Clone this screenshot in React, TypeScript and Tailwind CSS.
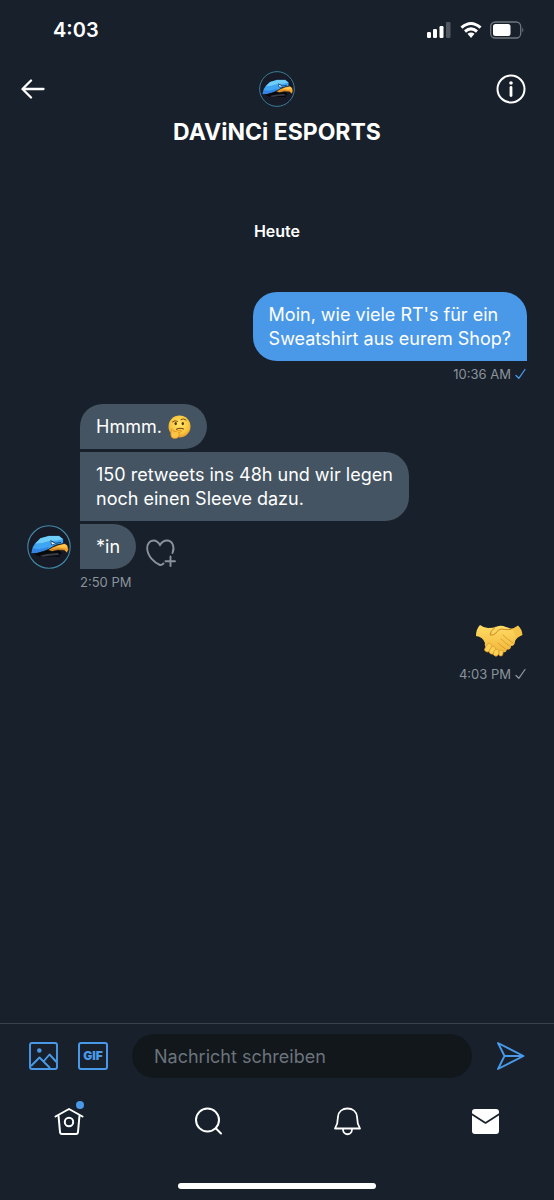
import React from 'react';

const EagleAvatar: React.FC<{ className: string }> = ({ className }) => (
  <svg viewBox="0 0 44 44" className={className} role="img" aria-label="DAViNCi ESPORTS">
    <circle cx="22" cy="22" r="21.2" fill="#171a27" stroke="#4189a6" strokeWidth="1.1" />
    <path d="M6 28 L20 24 L33 26 L35 29 L32 29.500 L33 32 L24 31.500 L15 32 L9 30Z" fill="#08090d" />
    <path d="M13 30.500 L20 29 L31 28 L32 30 L24 30.500 L16 31.800Z" fill="#3a3d48" />
    <path d="M4 28.500 L5.500 22 L8 18 L13.500 13 L22 10.500 L32 10.500 L36.500 14 L36.500 18.500 L29 20 L22 24 L17 26 L10 28Z" fill="#3fa4f2" stroke="#0a0d14" strokeWidth="0.6" />
    <path d="M8.500 18.500 L13.500 13.300 L22 10.900 L31.800 10.900 L36 14.200 L30 15.500 L22 16 L15 18Z" fill="#6fcdf8" />
    <path d="M4.500 28 L6 23.500 L12 24 L18 23 L22 21.500 L21 24 L17 25.600 L10 27.600Z" fill="#3384e6" />
    <path d="M21 25 L26 22 L31 20 L38 18.500 L40.500 20.500 L41.500 24.500 L40 28 L37.500 25.500 L31 25 L25 26.300Z" fill="#f5a62f" stroke="#0a0d14" strokeWidth="0.5" />
    <path d="M29 21.500 L37.500 19 L40 21 L40.500 22.500 L34 22.500Z" fill="#ffc64f" />
    <path d="M24 24.800 L31 23.900 L37.500 24.500" fill="none" stroke="#a8611a" strokeWidth="0.6" />
    <path d="M23.500 15.500 L28.500 18.300 L34 17.500 M24 16.500 L24.500 19.500 L27.500 19.800" fill="none" stroke="#0f2440" strokeWidth="0.8" />
    <path d="M24.300 16.700 L27.800 18.700 L25 19.400Z" fill="#f7fbff" />
  </svg>
);

const ThinkingFace = () => (
  <svg viewBox="0 0 24 24" className="inline-block size-6 align-[-6px]" role="img" aria-label="🤔">
    <defs>
      <radialGradient id="face" cx="50%" cy="40%" r="60%">
        <stop offset="0" stopColor="#ffe667" />
        <stop offset="0.7" stopColor="#f9c63d" />
        <stop offset="1" stopColor="#e89b2c" />
      </radialGradient>
    </defs>
    <circle cx="12.500" cy="11.500" r="11" fill="url(#face)" />
    <ellipse cx="8.700" cy="8.600" rx="1.200" ry="1.700" fill="#57351a" />
    <ellipse cx="15.800" cy="8.600" rx="1.200" ry="1.700" fill="#57351a" />
    <path d="M5.500 6.800 Q8 4.800 10.500 6.300 M14 4.500 Q16.500 2.800 19 5" fill="none" stroke="#7a4b18" strokeWidth="1" strokeLinecap="round" />
    <path d="M9.500 14.300 Q13 12.500 16.500 14" fill="none" stroke="#70431b" strokeWidth="1.100" strokeLinecap="round" />
    <path d="M4.500 14.500 Q5.500 13.500 6.500 15 L7 17 Q10 15.500 13.500 15.200 Q15.500 15.500 14 16.800 L11.500 17.500 Q13 19 12 21 Q10.500 24 7 23.500 Q3.500 23 3.800 19Z" fill="#fbc545" stroke="#d88720" strokeWidth="0.700" />
  </svg>
);

const Handshake = () => (
  <svg viewBox="0 0 48 34" className="h-[34px] w-12" role="img" aria-label="🤝">
    <defs>
      <linearGradient id="hand" x1="0" y1="0" x2="0" y2="1">
        <stop offset="0" stopColor="#ffdc66" />
        <stop offset="1" stopColor="#f0b436" />
      </linearGradient>
    </defs>
    <path d="M35 5 Q40 4 43 1.500 Q47 5 47.500 11 Q42 13 40 17 L37 20Z" fill="#f5c347" />
    <path d="M1 12 Q1 5 5 1 Q9 4 13 4 Q18 4 22 2.500 Q26 1 31 3 L37 5 Q41 10 40 17 Q40 22 36 22 Q36 26 32 25.500 Q31 29 28 28 Q27 31 24 30 Q19 32 17 29 Q13 29 13 25 Q9 23 10 19 Q8 13 1 12Z" fill="url(#hand)" />
    <path d="M36 5.500 Q31 6 26 5 Q23 5.500 21 9 Q18 12 15 11 Q15 7 20 3.500" fill="none" stroke="#cb8c25" strokeWidth="1" strokeLinecap="round" />
    <path d="M28 11 Q32 15 38 19 M26 15 L35 22.500 M23 19 L31 25.500" fill="none" stroke="#d99a2b" strokeWidth="0.900" strokeLinecap="round" />
    <g fill="#fbd055" stroke="#d99a2b" strokeWidth="0.700">
      <rect x="11" y="19" width="5" height="9" rx="2.500" transform="rotate(30 13 23)" />
      <rect x="15" y="22" width="5" height="8" rx="2.500" transform="rotate(27 17 26)" />
      <rect x="19" y="25" width="5" height="7" rx="2.500" transform="rotate(22 21 28)" />
      <rect x="24" y="26" width="4" height="6" rx="2" transform="rotate(12 26 29)" />
    </g>
  </svg>
);

const Check: React.FC<{ className: string }> = ({ className }) => (
  <svg viewBox="0 0 12 12" className={`size-3 ${className}`} fill="none" stroke="currentColor" strokeWidth="1.300" strokeLinecap="round" strokeLinejoin="round" aria-label="Gesendet">
    <path d="M1 7.500 L3.800 10.300 L10 1.500" />
  </svg>
);

const StatusBar = () => (
  <div className="flex h-15 items-center justify-between pr-[29px] pl-[53px]">
    <span className="text-xl font-semibold">4:03</span>
    <div className="flex items-center gap-2">
      <svg viewBox="0 0 25 18" className="mr-px h-[18px] w-[25px]" fill="#fff">
        <rect x="1" y="11" width="4" height="6" rx="1.200" />
        <rect x="7" y="8" width="4" height="9" rx="1.200" />
        <rect x="13.500" y="5" width="4" height="12" rx="1.200" />
        <rect x="20" y="1" width="4.500" height="16" rx="1.200" opacity="0.25" />
      </svg>
      <svg viewBox="0 0 22 18" className="h-[18px] w-[22px]" fill="none" stroke="#fff" strokeWidth="3">
        <path d="M1.500 6.700 Q11 -1.700 20.500 6.700" />
        <path d="M5 10.500 Q11 5.300 17 10.500" />
        <path d="M7.500 12.800 Q11 10.200 14.500 12.800 L11 17Z" fill="#fff" stroke="none" />
      </svg>
      <svg viewBox="0 0 35 18" className="h-[18px] w-[35px]">
        <rect x="0.700" y="1" width="30" height="16" rx="4.500" fill="none" stroke="#70757c" strokeWidth="1.300" />
        <rect x="3" y="3" width="17.500" height="12" rx="2.500" fill="#fff" />
        <path d="M32.300 6.500 Q34.500 9 32.300 11.500Z" fill="#70757c" />
      </svg>
    </div>
  </div>
);

const ChatHeader = () => (
  <header className="px-5 pt-[11px]">
    <div className="flex items-center justify-between">
      <button type="button" aria-label="Zurück" className="w-[38px]">
        <svg viewBox="0 0 26 20" className="h-5 w-[26px]" fill="none" stroke="#fff" strokeWidth="2.300" strokeLinecap="round" strokeLinejoin="round">
          <path d="M23.500 10 H3 M11 1.500 L2.500 10 L11 18.500" />
        </svg>
      </button>
      <EagleAvatar className="size-9" />
      <button type="button" aria-label="Info" className="w-[38px]">
        <svg viewBox="0 0 30 30" className="size-[30px]" fill="none" stroke="#fff" strokeWidth="2" strokeLinecap="round">
          <circle cx="15" cy="15" r="13.500" />
          <path d="M15 13.500 V21.500" strokeWidth="2.800" />
          <circle cx="15" cy="9" r="1.800" fill="#fff" stroke="none" />
        </svg>
      </button>
    </div>
    <h1 className="mt-[11px] text-center text-[23px] leading-7 font-bold">DAViNCi ESPORTS</h1>
  </header>
);

const received = [
  { id: 1, shape: 'rounded-t-3xl rounded-br-3xl', body: <>Hmmm. <ThinkingFace /></> },
  { id: 2, shape: 'rounded-r-3xl', body: <>150 retweets ins 48h und wir legen<br />noch einen Sleeve dazu.</> },
  { id: 3, shape: 'rounded-r-3xl', body: <>*in</> },
];

const Messages = () => (
  <main className="flex flex-1 flex-col px-[27px]">
    <h2 className="mt-[73px] text-center text-base leading-6 font-semibold">Heute</h2>

    <div className="mt-[49px] flex flex-col items-end">
      <p className="rounded-t-3xl rounded-bl-3xl bg-[#4a99e9] px-4 pt-[11px] pb-[10px] text-lg leading-6">
        Moin, wie viele RT's für ein<br />Sweatshirt aus eurem Shop?
      </p>
      <div className="mt-1 flex items-center gap-1 text-[13px] leading-[18px] text-[#8a939c]">
        10:36 AM <Check className="text-[#4a99e9]" />
      </div>
    </div>

    <div className="mt-[21px] flex items-end gap-[9px]">
      <EagleAvatar className="size-11 shrink-0" />
      <div className="flex flex-col items-start gap-[3px]">
        {received.map((message) => (
          <div key={message.id} className="flex items-center gap-[10px]">
            <p className={`bg-[#445463] px-4 pt-[11px] pb-[10px] text-lg leading-6 ${message.shape}`}>{message.body}</p>
            {message.id === 3 && (
              <button type="button" aria-label="Reagieren" className="mt-3">
                <svg viewBox="0 0 30 28" className="h-7 w-[30px]" fill="none" stroke="#8a939c" strokeWidth="1.900" strokeLinecap="round">
                  <path d="M26.500 14 C29 8 26.500 1.500 21 1.500 C17.500 1.500 15.500 3.500 14 6 C12.500 3.500 10.500 1.500 7.500 1.500 C3.500 1.500 1 5 1.200 9.500 C1.500 17 8 23.500 14 26 C15.500 26.200 16.500 25.500 17.500 24.500" />
                  <path d="M24.500 17.500 V27 M19.500 22.300 H29" />
                </svg>
              </button>
            )}
          </div>
        ))}
      </div>
    </div>
    <div className="mt-1 pl-[53px] text-[13px] leading-[18px] text-[#8a939c]">2:50 PM</div>

    <div className="mt-[33px] flex flex-col items-end">
      <div className="mr-1"><Handshake /></div>
      <div className="mt-[7px] flex items-center gap-1 text-[13px] leading-[18px] text-[#8a939c]">
        4:03 PM <Check className="text-[#8a939c]" />
      </div>
    </div>
  </main>
);

const Composer = () => (
  <form className="flex items-center border-t border-[#3b424b] px-7 pt-[10px]" onSubmit={(e) => e.preventDefault()}>
    <button type="button" aria-label="Bild" className="text-[#4a99e9]">
      <svg viewBox="0 0 30 30" className="size-[30px]" fill="none" stroke="currentColor" strokeWidth="1.900" strokeLinejoin="round">
        <rect x="2" y="2" width="27" height="26" rx="2" />
        <circle cx="11.300" cy="9.500" r="2.300" fill="currentColor" stroke="none" />
        <path d="M3 25 L11.500 16.500 L22 27 M15.500 20.500 L21.500 13.500 L28.500 21" />
      </svg>
    </button>
    <button type="button" aria-label="GIF" className="ml-5 flex h-7 w-[30px] items-center justify-center rounded-[3px] border-2 border-[#4a99e9] text-xs font-black text-[#4a99e9]">
      GIF
    </button>
    <input
      type="text"
      aria-label="Nachricht schreiben"
      placeholder="Nachricht schreiben"
      className="ml-6 h-11 min-w-0 flex-1 rounded-full bg-[#12171b] px-[22px] text-lg placeholder-[#6b747d] outline-none"
    />
    <button type="submit" aria-label="Senden" className="ml-6 text-[#4a99e9]">
      <svg viewBox="0 0 30 30" className="size-[30px]" fill="none" stroke="currentColor" strokeWidth="1.900" strokeLinejoin="round">
        <path d="M2 2 L27.500 15 L2 28 L8.500 15Z M8.500 15 H27" />
      </svg>
    </button>
  </form>
);

const TabBar = () => (
  <nav className="flex justify-around pt-[27px] pb-[46px]">
    <a href="#home" aria-label="Startseite" className="relative">
      <svg viewBox="0 0 32 32" className="size-8" fill="none" stroke="#fff" strokeWidth="2" strokeLinecap="round" strokeLinejoin="round">
        <path d="M2.500 11.500 L16 4 L29.500 11.500 M5.500 10.500 L7 27 Q7.200 29 9 29 H23 Q24.800 29 25 27 L26.500 10.500" />
        <circle cx="16" cy="17" r="4.200" />
      </svg>
      <span className="absolute -top-1 right-[1px] size-2 rounded-full bg-[#4a99e9]" />
    </a>
    <a href="#search" aria-label="Suche">
      <svg viewBox="0 0 32 32" className="size-8" fill="none" stroke="#fff" strokeWidth="2" strokeLinecap="round">
        <circle cx="15.500" cy="15" r="11.500" />
        <path d="M24 23.500 L29 28.500" />
      </svg>
    </a>
    <a href="#notifications" aria-label="Mitteilungen">
      <svg viewBox="0 0 32 32" className="size-8" fill="none" stroke="#fff" strokeWidth="1.800" strokeLinecap="round" strokeLinejoin="round">
        <path d="M5 23.500 H30 L27.800 18.500 L27 11.500 C26.500 6.500 22.500 3.500 17.500 3.500 C12.500 3.500 8.500 6.500 8 11.500 L7.200 18.500Z" />
        <path d="M13 24 C13 31 22 31 22 24" />
      </svg>
    </a>
    <a href="#messages" aria-label="Nachrichten">
      <svg viewBox="0 0 32 32" className="size-8">
        <rect x="3" y="4" width="27" height="25" rx="3" fill="#fff" />
        <path d="M2.500 9 L16.500 18 L30.500 9" fill="none" stroke="#18202b" strokeWidth="1.700" strokeLinejoin="round" />
      </svg>
    </a>
  </nav>
);

const App: React.FC = () => {
  return (
    <div className="flex min-h-screen flex-col bg-[#18202b] font-['Inter',sans-serif] text-white">
      <StatusBar />
      <ChatHeader />
      <Messages />
      <footer>
        <Composer />
        <TabBar />
        <div className="mx-auto mb-[11px] h-[6px] w-[198px] rounded-full bg-white" />
      </footer>
    </div>
  );
};

export default App;
